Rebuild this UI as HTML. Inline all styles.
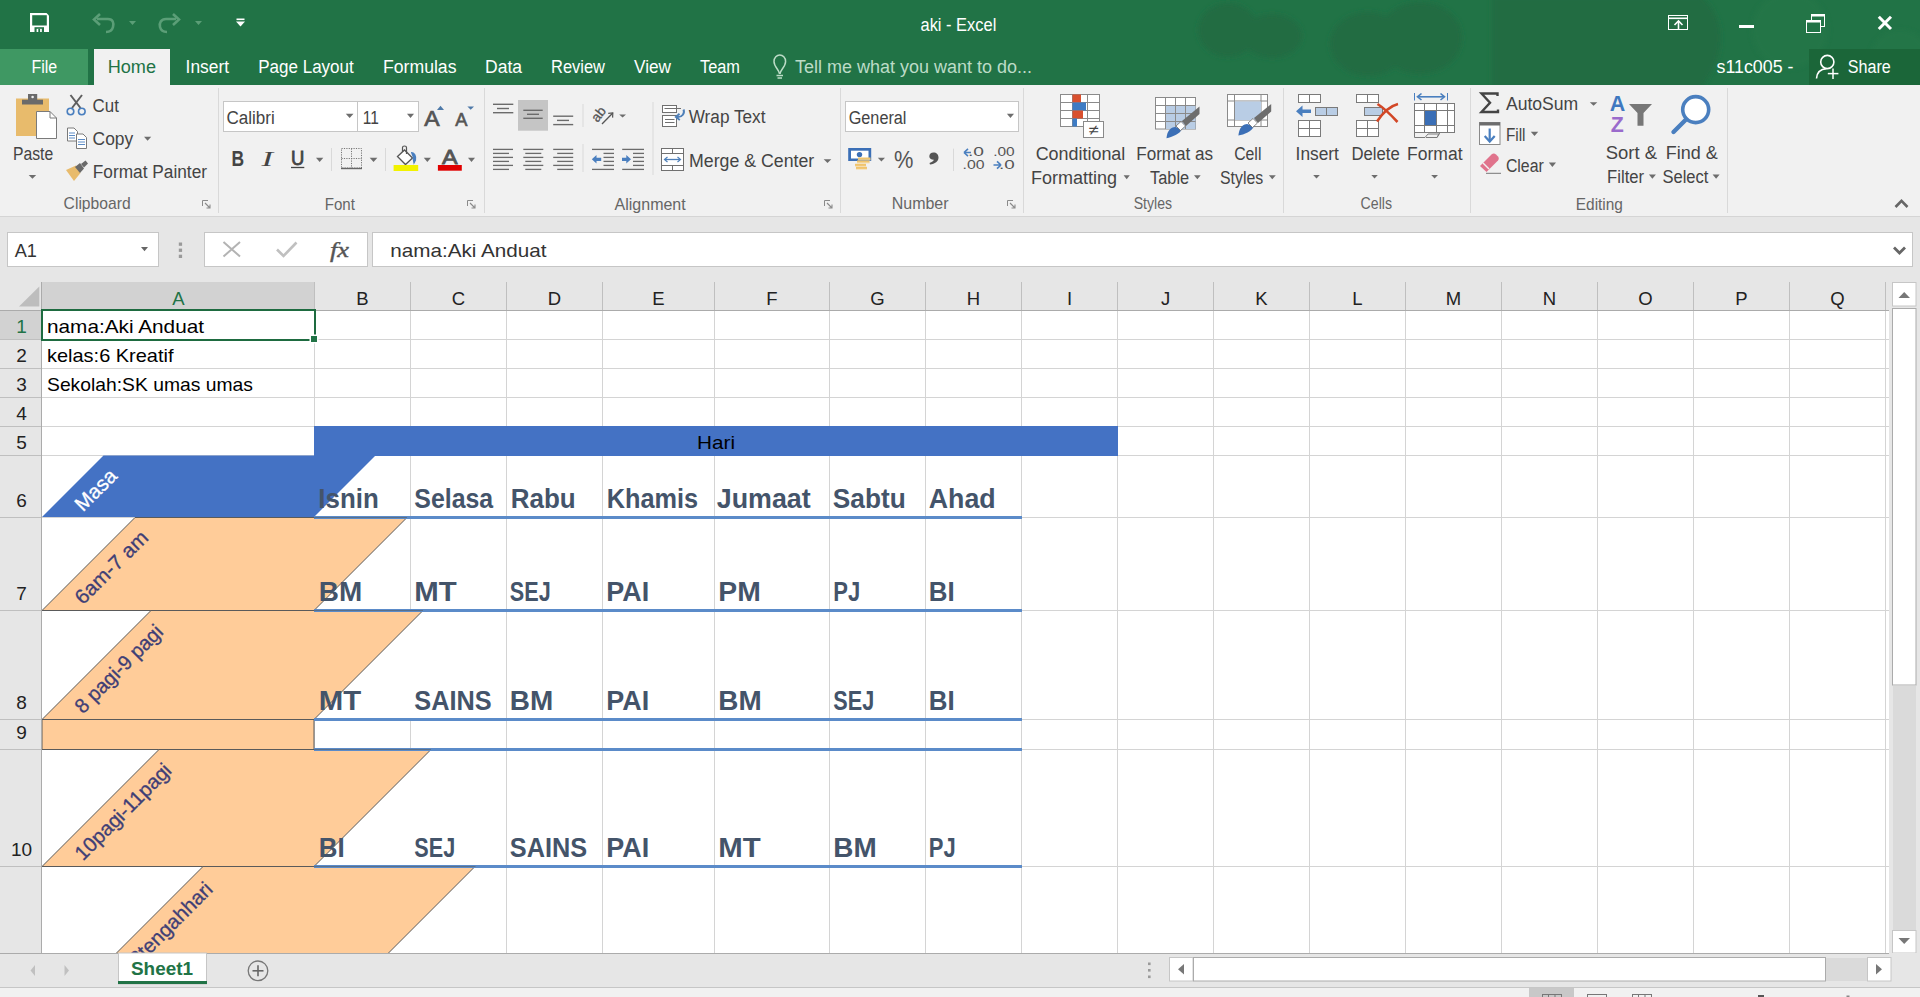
<!DOCTYPE html>
<html><head><meta charset="utf-8"><title>aki - Excel</title>
<style>
html,body{margin:0;padding:0;width:1920px;height:997px;overflow:hidden;background:#fff;}
svg{display:block;font-family:"Liberation Sans", sans-serif;}
</style></head><body>
<svg width="1920" height="997" viewBox="0 0 1920 997" shape-rendering="auto">
<rect x="0" y="0" width="1920" height="85" fill="#217346"/>
<defs><filter id="soft" x="-10%" y="-50%" width="120%" height="200%"><feGaussianBlur stdDeviation="2.5"/></filter></defs>
<g fill="#206c42" filter="url(#soft)">
<ellipse cx="1228" cy="30" rx="30" ry="27"/>
<ellipse cx="1272" cy="36" rx="30" ry="22"/>
<ellipse cx="1368" cy="44" rx="38" ry="32"/>
<ellipse cx="1420" cy="38" rx="42" ry="36"/>
<path d="M1492 -5 H1700 C1730 20 1725 60 1700 90 H1492 Z"/>
</g>
<g fill="#25784a" opacity="0.5" filter="url(#soft)">
<circle cx="1790" cy="30" r="38"/>
<circle cx="1900" cy="60" r="30"/>
</g>
<path d="M30 13 H46.5 L49 15.5 V32 H30 Z" fill="#ffffff"/>
<rect x="32.2" y="15.2" width="14.6" height="10.3" fill="#217346"/>
<rect x="34.5" y="27.2" width="9.5" height="4.8" fill="#217346"/>
<rect x="36.6" y="28.8" width="5.2" height="3.2" fill="#ffffff"/>
<rect x="38.3" y="28.8" width="1.8" height="3.2" fill="#217346"/>
<path d="M97 19 L108 19 C113 19 114 23 113 27 C112 31 109 32 106 32" fill="none" stroke="#5b9e77" stroke-width="2.6"/>
<path d="M100 14 L94 19.5 L100 25" fill="none" stroke="#5b9e77" stroke-width="2.6"/>
<path d="M129 21 H136 L132.5 25 Z" fill="#5b9e77"/>
<path d="M176 19 L166 19 C161 19 159 23 160 27 C161 31 164 32 167 32" fill="none" stroke="#5b9e77" stroke-width="2.6"/>
<path d="M173 14 L179 19.5 L173 25" fill="none" stroke="#5b9e77" stroke-width="2.6"/>
<path d="M195 21 H202 L198.5 25 Z" fill="#5b9e77"/>
<rect x="236.5" y="18.5" width="8" height="1.6" fill="#ffffff"/>
<path d="M236 21.5 H245 L240.5 26.5 Z" fill="#ffffff"/>
<text x="920.5" y="31" font-size="18" fill="#ffffff" textLength="75.8" lengthAdjust="spacingAndGlyphs">aki - Excel</text>
<rect x="1668.5" y="15.5" width="19" height="14" fill="none" stroke="#ffffff" stroke-width="1"/>
<rect x="1668" y="17.5" width="20" height="1.6" fill="#ffffff"/>
<line x1="1678.5" y1="29.5" x2="1678.5" y2="21.5" stroke="#ffffff" stroke-width="1.6"/>
<path d="M1674.5 25 L1678.5 21 L1682.5 25" fill="none" stroke="#ffffff" stroke-width="1.6"/>
<rect x="1739" y="25" width="15" height="3" fill="#ffffff"/>
<rect x="1811.5" y="14.5" width="13" height="12" fill="none" stroke="#ffffff" stroke-width="1"/>
<rect x="1811" y="14" width="14" height="2.5" fill="#ffffff"/>
<rect x="1806.5" y="20.5" width="14" height="12" fill="#217346" stroke="#ffffff" stroke-width="1"/>
<rect x="1806" y="20" width="15" height="2.5" fill="#ffffff"/>
<path d="M1878.8 16.8 L1891 29 M1891 16.8 L1878.8 29" fill="none" stroke="#ffffff" stroke-width="3"/>
<rect x="0" y="49" width="88" height="36" fill="#3f9863"/>
<rect x="94" y="49" width="76" height="36" fill="#f1f1f1"/>
<rect x="1809" y="49" width="111" height="36" fill="#1b6639"/>
<text x="31.5" y="72.7" font-size="18" fill="#ffffff" textLength="25.7" lengthAdjust="spacingAndGlyphs">File</text>
<text x="107.7" y="72.7" font-size="18" fill="#217346" textLength="48.3" lengthAdjust="spacingAndGlyphs">Home</text>
<text x="185.6" y="72.7" font-size="18" fill="#ffffff" textLength="43.4" lengthAdjust="spacingAndGlyphs">Insert</text>
<text x="258.2" y="72.7" font-size="18" fill="#ffffff" textLength="95.6" lengthAdjust="spacingAndGlyphs">Page Layout</text>
<text x="383" y="72.7" font-size="18" fill="#ffffff" textLength="73.5" lengthAdjust="spacingAndGlyphs">Formulas</text>
<text x="485" y="72.7" font-size="18" fill="#ffffff" textLength="37" lengthAdjust="spacingAndGlyphs">Data</text>
<text x="551" y="72.7" font-size="18" fill="#ffffff" textLength="54" lengthAdjust="spacingAndGlyphs">Review</text>
<text x="634" y="72.7" font-size="18" fill="#ffffff" textLength="37" lengthAdjust="spacingAndGlyphs">View</text>
<text x="700" y="72.7" font-size="18" fill="#ffffff" textLength="40" lengthAdjust="spacingAndGlyphs">Team</text>
<path d="M779.5 74 C779.5 70 774 67 774 61.5 C774 57.5 776.8 55 779.8 55 C782.8 55 785.6 57.5 785.6 61.5 C785.6 67 780 70 780 74" fill="none" stroke="#bcdcc7" stroke-width="1.5"/>
<line x1="776.5" y1="75.5" x2="783" y2="75.5" stroke="#bcdcc7" stroke-width="1.5"/>
<line x1="777.5" y1="78" x2="782" y2="78" stroke="#bcdcc7" stroke-width="1.5"/>
<text x="795" y="72.7" font-size="18" fill="#bcdcc7" textLength="237" lengthAdjust="spacingAndGlyphs">Tell me what you want to do...</text>
<text x="1716.6" y="72.6" font-size="18" fill="#ffffff" textLength="76.8" lengthAdjust="spacingAndGlyphs">s11c005 -</text>
<circle cx="1827.3" cy="62" r="6.6" fill="none" stroke="#ffffff" stroke-width="1.6"/>
<path d="M1816.5 78.5 C1817 72 1821 69 1826.5 68.8" fill="none" stroke="#ffffff" stroke-width="1.6"/>
<line x1="1833" y1="68.5" x2="1833" y2="79" stroke="#ffffff" stroke-width="1.5"/>
<line x1="1827.8" y1="73.6" x2="1838.4" y2="73.6" stroke="#ffffff" stroke-width="1.5"/>
<text x="1847.8" y="72.6" font-size="18" fill="#ffffff" textLength="43" lengthAdjust="spacingAndGlyphs">Share</text>
<rect x="0" y="85" width="1920" height="132" fill="#f1f1f1"/>
<line x1="0" y1="216.5" x2="1920" y2="216.5" stroke="#d5d5d5" stroke-width="1"/>
<rect x="16" y="98.5" width="33" height="37.5" fill="#e8bb6c"/>
<rect x="22" y="99.7" width="21" height="4.8" fill="#6a6a6a"/>
<rect x="28" y="94" width="9.2" height="6" fill="#6a6a6a"/>
<circle cx="32.6" cy="97" r="1.3" fill="#f1f1f1"/>
<path d="M36.5 111.5 H50 L56.5 118 V138.5 H36.5 Z" fill="#ffffff" stroke="#7a7a7a" stroke-width="1"/>
<path d="M50 111.5 V118 H56.5" fill="none" stroke="#7a7a7a" stroke-width="1"/>
<text x="13" y="159.7" font-size="18" fill="#444444" textLength="40.2" lengthAdjust="spacingAndGlyphs">Paste</text>
<path d="M28.7 175 H36.2 L32.45 178.8 Z" fill="#6d6d6d"/>
<path d="M70.5 95 L80.5 108 M82 95 L72 108" fill="none" stroke="#5f5f5f" stroke-width="2"/>
<circle cx="70.5" cy="111.5" r="3.3" fill="none" stroke="#4a7fbf" stroke-width="1.6"/>
<circle cx="81.8" cy="111.5" r="3.3" fill="none" stroke="#4a7fbf" stroke-width="1.6"/>
<text x="92.6" y="112.2" font-size="18" fill="#444444" textLength="26.3" lengthAdjust="spacingAndGlyphs">Cut</text>
<path d="M67.5 128 H74 L77.5 131.5 V141 H67.5 Z" fill="#ffffff" stroke="#7a7a7a" stroke-width="1"/>
<path d="M76.5 134 H83 L86.5 137.5 V148.5 H76.5 Z" fill="#ffffff" stroke="#7a7a7a" stroke-width="1"/>
<line x1="69" y1="133" x2="75" y2="133" stroke="#4a7fbf" stroke-width="0.9"/>
<line x1="69" y1="135.5" x2="75" y2="135.5" stroke="#4a7fbf" stroke-width="0.9"/>
<line x1="69" y1="138" x2="75" y2="138" stroke="#4a7fbf" stroke-width="0.9"/>
<line x1="78" y1="139.5" x2="85" y2="139.5" stroke="#4a7fbf" stroke-width="0.9"/>
<line x1="78" y1="142" x2="85" y2="142" stroke="#4a7fbf" stroke-width="0.9"/>
<line x1="78" y1="144.5" x2="85" y2="144.5" stroke="#4a7fbf" stroke-width="0.9"/>
<text x="92.6" y="144.8" font-size="18" fill="#444444" textLength="40.6" lengthAdjust="spacingAndGlyphs">Copy</text>
<path d="M144 136.8 H151.2 L147.6 140.8 Z" fill="#6d6d6d"/>
<path d="M66 170 L76 165.5 L80.5 173 L74 181 Z" fill="#e8bb6c"/>
<path d="M75 167 L80 163 L84 168.5 L80 173 Z" fill="#6a6a6a"/>
<path d="M81 164 L85.5 160.5 L88 163.5 L84 167.5 Z" fill="#6a6a6a"/>
<text x="92.8" y="178.1" font-size="18" fill="#444444" textLength="114.2" lengthAdjust="spacingAndGlyphs">Format Painter</text>
<text x="63.6" y="209.2" font-size="17" fill="#666666" textLength="67" lengthAdjust="spacingAndGlyphs">Clipboard</text>
<path d="M202.5 206 V200.5 H208" fill="none" stroke="#8a8a8a" stroke-width="1"/>
<path d="M205 203 L210 208 M210 204.5 V208 H206.5" fill="none" stroke="#8a8a8a" stroke-width="1.1"/>
<line x1="218.5" y1="88" x2="218.5" y2="213" stroke="#d9d9d9" stroke-width="1"/>
<rect x="223.5" y="101.5" width="134" height="30" fill="#ffffff" stroke="#c6c6c6" stroke-width="1"/>
<rect x="357.5" y="101.5" width="61" height="30" fill="#ffffff" stroke="#c6c6c6" stroke-width="1"/>
<text x="226.5" y="124" font-size="18" fill="#444444" textLength="48.3" lengthAdjust="spacingAndGlyphs">Calibri</text>
<path d="M345.8 113.8 H353.5 L349.65 118 Z" fill="#6d6d6d"/>
<text x="362.7" y="124" font-size="18" fill="#444444" textLength="16.1" lengthAdjust="spacingAndGlyphs">11</text>
<path d="M407 113.8 H414 L410.5 118 Z" fill="#6d6d6d"/>
<text x="424.3" y="125.8" font-size="22" fill="#555" textLength="15.4" lengthAdjust="spacingAndGlyphs" stroke="#555" stroke-width="0.7">A</text>
<path d="M437 110 L440.5 105.7 L444 110 Z" fill="#4e79a8"/>
<text x="455.2" y="125.8" font-size="17.5" fill="#555" textLength="12.2" lengthAdjust="spacingAndGlyphs" stroke="#555" stroke-width="0.6">A</text>
<path d="M467.4 106.4 H474 L470.7 109.8 Z" fill="#4e79a8"/>
<text x="231.6" y="165.9" font-size="22" fill="#444" font-weight="bold" textLength="12.6" lengthAdjust="spacingAndGlyphs">B</text>
<text x="261.4" y="165.9" font-size="22" fill="#444" font-family="Liberation Serif" font-style="italic" textLength="11.6" lengthAdjust="spacingAndGlyphs">I</text>
<text x="291" y="164.7" font-size="20" fill="#444" textLength="13.3" lengthAdjust="spacingAndGlyphs" stroke="#444" stroke-width="0.8">U</text>
<line x1="291" y1="167.5" x2="304.3" y2="167.5" stroke="#444" stroke-width="1.3"/>
<path d="M316 157.7 H323.3 L319.65 162 Z" fill="#6d6d6d"/>
<line x1="331.5" y1="148" x2="331.5" y2="171" stroke="#d9d9d9" stroke-width="1"/>
<g stroke="#777" stroke-width="1" stroke-dasharray="1.2 1.2" fill="none">
<rect x="341.5" y="148.5" width="20" height="19.5"/>
<line x1="351.5" y1="148.5" x2="351.5" y2="168"/>
<line x1="341.5" y1="158.5" x2="361.5" y2="158.5"/>
</g>
<line x1="341" y1="168.5" x2="362" y2="168.5" stroke="#666" stroke-width="1.4"/>
<path d="M369.7 157.7 H377.4 L373.54999999999995 162 Z" fill="#6d6d6d"/>
<line x1="385.5" y1="148" x2="385.5" y2="171" stroke="#d9d9d9" stroke-width="1"/>
<path d="M397.5 156.5 L404.5 150 L412.5 158 L405.5 164.5 Z" fill="#ffffff" stroke="#555" stroke-width="1.3"/>
<path d="M402.5 152 V147.5 C402.5 145.5 406.5 145.5 406.5 147.5 V154" fill="none" stroke="#555" stroke-width="1.2"/>
<path d="M411 152.5 C414.5 152.5 416 155.5 415.5 160 L414 163 L413 158" fill="#4a7fbf" stroke="#4a7fbf" stroke-width="1.2"/>
<rect x="393.6" y="165" width="24.6" height="6" fill="#f2f200"/>
<path d="M423.8 157.7 H430.9 L427.35 162 Z" fill="#6d6d6d"/>
<text x="442" y="164" font-size="20" fill="#555" textLength="15.6" lengthAdjust="spacingAndGlyphs" stroke="#555" stroke-width="0.8">A</text>
<rect x="437.9" y="165" width="23.9" height="5.7" fill="#e00000"/>
<path d="M468 157.7 H475 L471.5 162 Z" fill="#6d6d6d"/>
<text x="324.7" y="209.75" font-size="17" fill="#666666" textLength="30.2" lengthAdjust="spacingAndGlyphs">Font</text>
<path d="M467.5 206 V200.5 H473" fill="none" stroke="#8a8a8a" stroke-width="1"/>
<path d="M470 203 L475 208 M475 204.5 V208 H471.5" fill="none" stroke="#8a8a8a" stroke-width="1.1"/>
<line x1="484.5" y1="88" x2="484.5" y2="213" stroke="#d9d9d9" stroke-width="1"/>
<line x1="493" y1="104.3" x2="513.3" y2="104.3" stroke="#6b6b6b" stroke-width="1.4"/>
<line x1="497" y1="108.5" x2="509" y2="108.5" stroke="#6b6b6b" stroke-width="1.4"/>
<line x1="493" y1="112.7" x2="513.3" y2="112.7" stroke="#6b6b6b" stroke-width="1.4"/>
<rect x="518" y="100" width="30" height="30.7" fill="#c5c5c5"/>
<line x1="523.3" y1="110.3" x2="542.7" y2="110.3" stroke="#6b6b6b" stroke-width="1.4"/>
<line x1="527" y1="114.3" x2="539" y2="114.3" stroke="#6b6b6b" stroke-width="1.4"/>
<line x1="523.3" y1="118.3" x2="542.7" y2="118.3" stroke="#6b6b6b" stroke-width="1.4"/>
<line x1="553.2" y1="116.2" x2="573.2" y2="116.2" stroke="#6b6b6b" stroke-width="1.4"/>
<line x1="557" y1="120.4" x2="569" y2="120.4" stroke="#6b6b6b" stroke-width="1.4"/>
<line x1="553.2" y1="124.6" x2="573.2" y2="124.6" stroke="#6b6b6b" stroke-width="1.4"/>
<line x1="583.0" y1="104" x2="583.0" y2="127" stroke="#d9d9d9" stroke-width="1"/>
<text x="0" y="0" font-size="13.5" fill="#555" stroke="#555" stroke-width="0.3" transform="translate(597.5,123) rotate(-52)">ab</text>
<line x1="602" y1="124" x2="612.8" y2="113" stroke="#555" stroke-width="1.3"/>
<path d="M608.2 113.3 L612.8 113 L612.6 117.6" fill="none" stroke="#555" stroke-width="1.2"/>
<path d="M619.2 114.5 H626 L622.6 117.4 Z" fill="#6d6d6d"/>
<line x1="653.0" y1="102" x2="653.0" y2="175" stroke="#d9d9d9" stroke-width="1"/>
<rect x="662.5" y="105.5" width="14" height="7" fill="#ffffff" stroke="#707070" stroke-width="1"/>
<line x1="664.5" y1="108.5" x2="681" y2="108.5" stroke="#707070" stroke-width="1"/>
<rect x="662.5" y="115.5" width="14" height="11" fill="#ffffff" stroke="#707070" stroke-width="1"/>
<line x1="665" y1="119.5" x2="674.5" y2="119.5" stroke="#707070" stroke-width="1"/>
<line x1="665" y1="122.5" x2="674.5" y2="122.5" stroke="#707070" stroke-width="1"/>
<path d="M683.5 109.5 C685 113 682.5 117.5 677 117" fill="none" stroke="#4e7fb8" stroke-width="2"/>
<path d="M679.5 113.8 L675.8 117 L679.8 120" fill="none" stroke="#4e7fb8" stroke-width="1.8"/>
<text x="688.7" y="122.5" font-size="18" fill="#444444" textLength="76.8" lengthAdjust="spacingAndGlyphs">Wrap Text</text>
<line x1="493" y1="149.4" x2="513" y2="149.4" stroke="#6b6b6b" stroke-width="1.3"/>
<line x1="493" y1="153.4" x2="509" y2="153.4" stroke="#6b6b6b" stroke-width="1.3"/>
<line x1="493" y1="157.4" x2="513" y2="157.4" stroke="#6b6b6b" stroke-width="1.3"/>
<line x1="493" y1="161.4" x2="509" y2="161.4" stroke="#6b6b6b" stroke-width="1.3"/>
<line x1="493" y1="165.4" x2="513" y2="165.4" stroke="#6b6b6b" stroke-width="1.3"/>
<line x1="493" y1="169.4" x2="509" y2="169.4" stroke="#6b6b6b" stroke-width="1.3"/>
<line x1="523.3" y1="149.4" x2="543.3" y2="149.4" stroke="#6b6b6b" stroke-width="1.3"/>
<line x1="525.3" y1="153.4" x2="541.3" y2="153.4" stroke="#6b6b6b" stroke-width="1.3"/>
<line x1="523.3" y1="157.4" x2="543.3" y2="157.4" stroke="#6b6b6b" stroke-width="1.3"/>
<line x1="525.3" y1="161.4" x2="541.3" y2="161.4" stroke="#6b6b6b" stroke-width="1.3"/>
<line x1="523.3" y1="165.4" x2="543.3" y2="165.4" stroke="#6b6b6b" stroke-width="1.3"/>
<line x1="525.3" y1="169.4" x2="541.3" y2="169.4" stroke="#6b6b6b" stroke-width="1.3"/>
<line x1="553.2" y1="149.4" x2="573.2" y2="149.4" stroke="#6b6b6b" stroke-width="1.3"/>
<line x1="557.2" y1="153.4" x2="573.2" y2="153.4" stroke="#6b6b6b" stroke-width="1.3"/>
<line x1="553.2" y1="157.4" x2="573.2" y2="157.4" stroke="#6b6b6b" stroke-width="1.3"/>
<line x1="557.2" y1="161.4" x2="573.2" y2="161.4" stroke="#6b6b6b" stroke-width="1.3"/>
<line x1="553.2" y1="165.4" x2="573.2" y2="165.4" stroke="#6b6b6b" stroke-width="1.3"/>
<line x1="557.2" y1="169.4" x2="573.2" y2="169.4" stroke="#6b6b6b" stroke-width="1.3"/>
<line x1="583.0" y1="144" x2="583.0" y2="172" stroke="#d9d9d9" stroke-width="1"/>
<line x1="592" y1="149.4" x2="614" y2="149.4" stroke="#6b6b6b" stroke-width="1.3"/>
<line x1="603.5" y1="153.4" x2="614" y2="153.4" stroke="#6b6b6b" stroke-width="1.3"/>
<line x1="603.5" y1="157.4" x2="614" y2="157.4" stroke="#6b6b6b" stroke-width="1.3"/>
<line x1="603.5" y1="161.4" x2="614" y2="161.4" stroke="#6b6b6b" stroke-width="1.3"/>
<line x1="603.5" y1="165.4" x2="614" y2="165.4" stroke="#6b6b6b" stroke-width="1.3"/>
<line x1="592" y1="169.4" x2="614" y2="169.4" stroke="#6b6b6b" stroke-width="1.3"/>
<path d="M591.8 159.3 L596.5 155 V157.7 H601.2 V160.9 H596.5 V163.6 Z" fill="#4a7fbf"/>
<line x1="622.2" y1="149.4" x2="644" y2="149.4" stroke="#6b6b6b" stroke-width="1.3"/>
<line x1="633" y1="153.4" x2="644" y2="153.4" stroke="#6b6b6b" stroke-width="1.3"/>
<line x1="633" y1="157.4" x2="644" y2="157.4" stroke="#6b6b6b" stroke-width="1.3"/>
<line x1="633" y1="161.4" x2="644" y2="161.4" stroke="#6b6b6b" stroke-width="1.3"/>
<line x1="633" y1="165.4" x2="644" y2="165.4" stroke="#6b6b6b" stroke-width="1.3"/>
<line x1="622.2" y1="169.4" x2="644" y2="169.4" stroke="#6b6b6b" stroke-width="1.3"/>
<path d="M631 159.3 L626.3 155 V157.7 H622 V160.9 H626.3 V163.6 Z" fill="#4a7fbf"/>
<rect x="661.5" y="148.5" width="22" height="22" fill="#ffffff" stroke="#707070" stroke-width="1"/>
<line x1="661.5" y1="153.5" x2="683.5" y2="153.5" stroke="#707070" stroke-width="1"/>
<line x1="661.5" y1="165.5" x2="683.5" y2="165.5" stroke="#707070" stroke-width="1"/>
<line x1="672.5" y1="148.5" x2="672.5" y2="153.5" stroke="#707070" stroke-width="1"/>
<line x1="672.5" y1="165.5" x2="672.5" y2="170.5" stroke="#707070" stroke-width="1"/>
<line x1="665" y1="159.5" x2="680" y2="159.5" stroke="#4e7fb8" stroke-width="1.3"/>
<path d="M667.5 157 L664.5 159.5 L667.5 162 M677.5 157 L680.5 159.5 L677.5 162" fill="none" stroke="#4e7fb8" stroke-width="1.2"/>
<text x="689.1" y="166.8" font-size="18" fill="#444444" textLength="125.1" lengthAdjust="spacingAndGlyphs">Merge &amp; Center</text>
<path d="M823.7 159.2 H831.3 L827.5 163 Z" fill="#6d6d6d"/>
<text x="614.6" y="209.6" font-size="17" fill="#666666" textLength="71.1" lengthAdjust="spacingAndGlyphs">Alignment</text>
<path d="M824.5 206 V200.5 H830" fill="none" stroke="#8a8a8a" stroke-width="1"/>
<path d="M827 203 L832 208 M832 204.5 V208 H828.5" fill="none" stroke="#8a8a8a" stroke-width="1.1"/>
<line x1="840.5" y1="88" x2="840.5" y2="213" stroke="#d9d9d9" stroke-width="1"/>
<rect x="845.5" y="101.5" width="173" height="30" fill="#ffffff" stroke="#c6c6c6" stroke-width="1"/>
<text x="848.7" y="123.8" font-size="18" fill="#444444" textLength="57.8" lengthAdjust="spacingAndGlyphs">General</text>
<path d="M1006.9 113.7 H1014 L1010.45 118 Z" fill="#6d6d6d"/>
<rect x="848.2" y="148" width="23" height="13" fill="#3b6fb6"/>
<rect x="851" y="150.7" width="17.5" height="7.8" fill="#ffffff"/>
<circle cx="859.5" cy="154.6" r="2.7" fill="#3b6fb6"/>
<rect x="858" y="157.5" width="12.5" height="2.3" fill="#f0c46c"/>
<line x1="858" y1="160.0" x2="870.5" y2="160.0" stroke="#f7e0b0" stroke-width="0.8"/>
<rect x="857" y="160.5" width="12.5" height="2.3" fill="#f0c46c"/>
<line x1="857" y1="163.0" x2="869.5" y2="163.0" stroke="#f7e0b0" stroke-width="0.8"/>
<rect x="855" y="163.8" width="11" height="2.3" fill="#f0c46c"/>
<line x1="855" y1="166.3" x2="866" y2="166.3" stroke="#f7e0b0" stroke-width="0.8"/>
<rect x="856" y="166.8" width="11" height="2.3" fill="#f0c46c"/>
<line x1="856" y1="169.3" x2="867" y2="169.3" stroke="#f7e0b0" stroke-width="0.8"/>
<path d="M877.8 157.7 H885 L881.4 161.6 Z" fill="#6d6d6d"/>
<text x="894" y="167.9" font-size="23" fill="#555" textLength="19.4" lengthAdjust="spacingAndGlyphs">%</text>
<path d="M933.5 152.5 C936.5 152.5 938.5 154.5 938.5 157.5 C938.5 161.5 935 164 930 164.5 L929.5 163 C932 162.3 933.5 161 933.8 159.8 C931 159.8 929.3 158.2 929.3 156.2 C929.3 154 931 152.5 933.5 152.5 Z" fill="#555"/>
<line x1="953.5" y1="148.6" x2="953.5" y2="171" stroke="#d9d9d9" stroke-width="1"/>
<text x="968" y="156.4" font-size="13" fill="#555" textLength="16" lengthAdjust="spacingAndGlyphs">.0</text>
<text x="962.6" y="168.8" font-size="13" fill="#555" textLength="22" lengthAdjust="spacingAndGlyphs">.00</text>
<path d="M964 152.5 L968 148.8 M964 152.5 L968 156.2 M964 152.5 H971" fill="none" stroke="#4a7fbf" stroke-width="1.6"/>
<text x="993.2" y="156.4" font-size="13" fill="#555" textLength="21.5" lengthAdjust="spacingAndGlyphs">.00</text>
<text x="999" y="168.8" font-size="13" fill="#555" textLength="15.7" lengthAdjust="spacingAndGlyphs">.0</text>
<path d="M1001 165 L997 161.3 M1001 165 L997 168.7 M1001 165 H993.5" fill="none" stroke="#4a7fbf" stroke-width="1.6"/>
<text x="891.7" y="209.3" font-size="17" fill="#666666" textLength="56.9" lengthAdjust="spacingAndGlyphs">Number</text>
<path d="M1007.5 206 V200.5 H1013" fill="none" stroke="#8a8a8a" stroke-width="1"/>
<path d="M1010 203 L1015 208 M1015 204.5 V208 H1011.5" fill="none" stroke="#8a8a8a" stroke-width="1.1"/>
<line x1="1023.5" y1="88" x2="1023.5" y2="213" stroke="#d9d9d9" stroke-width="1"/>
<rect x="1060.5" y="94.5" width="39" height="32" fill="#ffffff" stroke="#8a8a8a" stroke-width="1"/>
<line x1="1072.5" y1="94.5" x2="1072.5" y2="126.5" stroke="#8a8a8a" stroke-width="1"/>
<line x1="1087.5" y1="94.5" x2="1087.5" y2="126.5" stroke="#8a8a8a" stroke-width="1"/>
<line x1="1060.5" y1="102.5" x2="1099.5" y2="102.5" stroke="#8a8a8a" stroke-width="1"/>
<line x1="1060.5" y1="110.5" x2="1099.5" y2="110.5" stroke="#8a8a8a" stroke-width="1"/>
<line x1="1060.5" y1="118.5" x2="1099.5" y2="118.5" stroke="#8a8a8a" stroke-width="1"/>
<rect x="1072.5" y="94.5" width="8.5" height="8" fill="#d9502f"/>
<rect x="1072.5" y="102.5" width="13.5" height="8" fill="#3d7bc4"/>
<rect x="1072.5" y="110.5" width="10.5" height="8" fill="#d9502f"/>
<rect x="1072.5" y="118.5" width="4.5" height="8" fill="#3d7bc4"/>
<rect x="1083.5" y="121.5" width="20" height="16" fill="#ffffff" stroke="#8a8a8a" stroke-width="1"/>
<text x="1088.5" y="134.5" font-size="15" fill="#444" textLength="10" lengthAdjust="spacingAndGlyphs">≠</text>
<text x="1035.7" y="159.6" font-size="18" fill="#444444" textLength="89.6" lengthAdjust="spacingAndGlyphs">Conditional</text>
<text x="1031" y="183.7" font-size="18" fill="#444444" textLength="86" lengthAdjust="spacingAndGlyphs">Formatting</text>
<path d="M1123.6 175.3 H1129.8 L1126.6999999999998 179.2 Z" fill="#6d6d6d"/>
<rect x="1155.5" y="97.5" width="40" height="31.5" fill="#ffffff" stroke="#8a8a8a" stroke-width="1"/>
<rect x="1165" y="105.5" width="30.5" height="23.5" fill="#b9cde5"/>
<line x1="1165.5" y1="97.5" x2="1165.5" y2="129" stroke="#8a8a8a" stroke-width="1"/>
<line x1="1175.5" y1="97.5" x2="1175.5" y2="129" stroke="#8a8a8a" stroke-width="1"/>
<line x1="1185.5" y1="97.5" x2="1185.5" y2="129" stroke="#8a8a8a" stroke-width="1"/>
<line x1="1155.5" y1="105.5" x2="1195.5" y2="105.5" stroke="#8a8a8a" stroke-width="1"/>
<line x1="1155.5" y1="113.5" x2="1195.5" y2="113.5" stroke="#8a8a8a" stroke-width="1"/>
<line x1="1155.5" y1="121.5" x2="1195.5" y2="121.5" stroke="#8a8a8a" stroke-width="1"/>
<path d="M1182 121 L1199.5 106.5 L1199.5 114 L1186 126 Z" fill="#6d6d6d"/>
<path d="M1175 127 C1168 128 1167 134 1166.5 138.3 C1172 137 1180 134 1182 129 Z" fill="#3b6fb6"/>
<path d="M1176 126 L1181 121.5 L1185.5 126 L1180.5 130.5 Z" fill="#ffffff" stroke="#6d6d6d" stroke-width="0.8"/>
<text x="1136.2" y="159.6" font-size="18" fill="#444444" textLength="77" lengthAdjust="spacingAndGlyphs">Format as</text>
<text x="1150.1" y="183.7" font-size="18" fill="#444444" textLength="39.1" lengthAdjust="spacingAndGlyphs">Table</text>
<path d="M1194 175.3 H1200.7 L1197.35 179.2 Z" fill="#6d6d6d"/>
<rect x="1227.5" y="94.5" width="40" height="32" fill="#ffffff" stroke="#8a8a8a" stroke-width="1"/>
<line x1="1234.5" y1="94.5" x2="1234.5" y2="126.5" stroke="#8a8a8a" stroke-width="1"/>
<line x1="1261" y1="94.5" x2="1261" y2="126.5" stroke="#8a8a8a" stroke-width="1"/>
<line x1="1227.5" y1="101" x2="1267.5" y2="101" stroke="#8a8a8a" stroke-width="1"/>
<line x1="1227.5" y1="120" x2="1267.5" y2="120" stroke="#8a8a8a" stroke-width="1"/>
<rect x="1235" y="101.5" width="26" height="18.5" fill="#b9cde5"/>
<path d="M1254 118 L1271.2 104 L1271.2 111.5 L1258 123 Z" fill="#6d6d6d"/>
<path d="M1247 124 C1240 125 1239 131 1238.4 135.6 C1244 134.5 1252 131.5 1254 126 Z" fill="#3b6fb6"/>
<path d="M1248 123 L1253 118.5 L1257.5 123 L1252.5 127.5 Z" fill="#ffffff" stroke="#6d6d6d" stroke-width="0.8"/>
<text x="1234.2" y="159.6" font-size="18" fill="#444444" textLength="27.2" lengthAdjust="spacingAndGlyphs">Cell</text>
<text x="1220" y="183.7" font-size="18" fill="#444444" textLength="43.2" lengthAdjust="spacingAndGlyphs">Styles</text>
<path d="M1268.8 175.3 H1275.8 L1272.3 179.2 Z" fill="#6d6d6d"/>
<text x="1133.7" y="208.8" font-size="17" fill="#666666" textLength="38.3" lengthAdjust="spacingAndGlyphs">Styles</text>
<line x1="1283.5" y1="88" x2="1283.5" y2="213" stroke="#d9d9d9" stroke-width="1"/>
<rect x="1298.5" y="94.5" width="22" height="8" fill="#ffffff" stroke="#7a7a7a" stroke-width="1"/>
<line x1="1309.5" y1="94.5" x2="1309.5" y2="102.5" stroke="#7a7a7a" stroke-width="1"/>
<rect x="1315.5" y="107.5" width="22" height="8" fill="#b9cde5" stroke="#7a7a7a" stroke-width="1"/>
<line x1="1326.5" y1="107.5" x2="1326.5" y2="115.5" stroke="#7a7a7a" stroke-width="1"/>
<path d="M1296 111.3 L1302.5 105.5 V109.5 H1311 V113 H1302.5 V117 Z" fill="#4a7fbf"/>
<rect x="1298.5" y="120.5" width="22" height="16" fill="#ffffff" stroke="#7a7a7a" stroke-width="1"/>
<line x1="1309.5" y1="120.5" x2="1309.5" y2="136.5" stroke="#7a7a7a" stroke-width="1"/>
<line x1="1298.5" y1="128.5" x2="1320.5" y2="128.5" stroke="#7a7a7a" stroke-width="1"/>
<text x="1295.6" y="159.7" font-size="18" fill="#444444" textLength="43.3" lengthAdjust="spacingAndGlyphs">Insert</text>
<path d="M1313.2 175 H1319.8 L1316.5 178.6 Z" fill="#6d6d6d"/>
<rect x="1356.5" y="94.5" width="22" height="8" fill="#ffffff" stroke="#7a7a7a" stroke-width="1"/>
<line x1="1367.5" y1="94.5" x2="1367.5" y2="102.5" stroke="#7a7a7a" stroke-width="1"/>
<rect x="1364.5" y="107.5" width="18" height="8" fill="#b9cde5" stroke="#7a7a7a" stroke-width="1"/>
<rect x="1356.5" y="120.5" width="22" height="16" fill="#ffffff" stroke="#7a7a7a" stroke-width="1"/>
<line x1="1367.5" y1="120.5" x2="1367.5" y2="136.5" stroke="#7a7a7a" stroke-width="1"/>
<line x1="1356.5" y1="128.5" x2="1378.5" y2="128.5" stroke="#7a7a7a" stroke-width="1"/>
<path d="M1377.5 104 C1384 108 1391 115 1397.5 122 M1398 104 C1390 106 1382 114 1377 121.5" fill="none" stroke="#d24726" stroke-width="2.6"/>
<text x="1351.4" y="159.7" font-size="18" fill="#444444" textLength="48.3" lengthAdjust="spacingAndGlyphs">Delete</text>
<path d="M1371.3 175 H1377.8 L1374.55 178.6 Z" fill="#6d6d6d"/>
<line x1="1414.5" y1="93" x2="1414.5" y2="100.5" stroke="#4a7fbf" stroke-width="1"/>
<line x1="1447.5" y1="93" x2="1447.5" y2="100.5" stroke="#4a7fbf" stroke-width="1"/>
<line x1="1418" y1="96.8" x2="1444" y2="96.8" stroke="#4a7fbf" stroke-width="1.6"/>
<path d="M1421.5 93.5 L1417.5 96.8 L1421.5 100 M1440.5 93.5 L1444.5 96.8 L1440.5 100" fill="none" stroke="#4a7fbf" stroke-width="1.6"/>
<rect x="1414.5" y="103.5" width="40" height="29" fill="#ffffff" stroke="#7a7a7a" stroke-width="1"/>
<line x1="1424.5" y1="103.5" x2="1424.5" y2="132.5" stroke="#7a7a7a" stroke-width="1"/>
<line x1="1436.5" y1="103.5" x2="1436.5" y2="132.5" stroke="#7a7a7a" stroke-width="1"/>
<line x1="1447.5" y1="103.5" x2="1447.5" y2="132.5" stroke="#7a7a7a" stroke-width="1"/>
<line x1="1414.5" y1="110.5" x2="1454.5" y2="110.5" stroke="#7a7a7a" stroke-width="1"/>
<line x1="1414.5" y1="125.5" x2="1454.5" y2="125.5" stroke="#7a7a7a" stroke-width="1"/>
<rect x="1425" y="111" width="11" height="14" fill="#3b6fb6"/>
<path d="M1414.5 132.5 V137.5 H1425 L1428 134 H1439 L1437 137.5 H1426 M1437 137.5 L1440 132.5" fill="none" stroke="#7a7a7a" stroke-width="1"/>
<text x="1407.1" y="159.7" font-size="18" fill="#444444" textLength="55.4" lengthAdjust="spacingAndGlyphs">Format</text>
<path d="M1431.2 175 H1438 L1434.6 178.6 Z" fill="#6d6d6d"/>
<text x="1360.6" y="209.2" font-size="17" fill="#666666" textLength="31.5" lengthAdjust="spacingAndGlyphs">Cells</text>
<line x1="1470.5" y1="88" x2="1470.5" y2="213" stroke="#d9d9d9" stroke-width="1"/>
<path d="M1497.5 96 V93.5 H1481.5 L1490 102.8 L1481.5 112 H1498 V109.5" fill="none" stroke="#444" stroke-width="2.4"/>
<text x="1505.9" y="109.9" font-size="18" fill="#444444" textLength="72.4" lengthAdjust="spacingAndGlyphs">AutoSum</text>
<path d="M1589.8 102.2 H1597.3 L1593.55 105.7 Z" fill="#6d6d6d"/>
<rect x="1479.5" y="122.5" width="20.5" height="22" fill="#ffffff" stroke="#8a8a8a" stroke-width="1"/>
<rect x="1479.5" y="122.3" width="20.5" height="3.2" fill="#6d6d6d"/>
<line x1="1489.7" y1="128.5" x2="1489.7" y2="141" stroke="#4a7fbf" stroke-width="2.2"/>
<path d="M1484.7 136 L1489.7 141.5 L1494.7 136" fill="none" stroke="#4a7fbf" stroke-width="2.2"/>
<text x="1505.9" y="140.8" font-size="18" fill="#444444" textLength="19.6" lengthAdjust="spacingAndGlyphs">Fill</text>
<path d="M1530.8 131.7 H1538.2 L1534.5 135.9 Z" fill="#6d6d6d"/>
<path d="M1480 166 L1491.5 154.5 C1493 153 1494.5 153 1496 154.5 L1498 156.5 C1499 158 1499 159 1498 160.5 L1486.5 172 Z" fill="#e0738c"/>
<path d="M1483 163 L1489 169" fill="none" stroke="#f1f1f1" stroke-width="1.4"/>
<line x1="1486" y1="173.3" x2="1501" y2="173.3" stroke="#777" stroke-width="1"/>
<text x="1505.9" y="172.1" font-size="18" fill="#444444" textLength="37.9" lengthAdjust="spacingAndGlyphs">Clear</text>
<path d="M1548.8 162.6 H1556 L1552.4 166.9 Z" fill="#6d6d6d"/>
<text x="1609.8" y="110.6" font-size="22" fill="#3f78c0" font-weight="bold" textLength="15.5" lengthAdjust="spacingAndGlyphs">A</text>
<text x="1610.8" y="131.7" font-size="22" fill="#9a6bcc" font-weight="bold" textLength="13" lengthAdjust="spacingAndGlyphs">Z</text>
<path d="M1629 104 H1652 L1643.5 113 V125.7 H1637.5 V113 Z" fill="#777777"/>
<text x="1605.7" y="159.4" font-size="18" fill="#444444" textLength="51.3" lengthAdjust="spacingAndGlyphs">Sort &amp;</text>
<text x="1607.1" y="183.3" font-size="18" fill="#444444" textLength="37" lengthAdjust="spacingAndGlyphs">Filter</text>
<path d="M1648.9 174.6 H1655.9 L1652.4 178.8 Z" fill="#6d6d6d"/>
<circle cx="1695.7" cy="109.6" r="13" fill="#ffffff" stroke="#4a7fbf" stroke-width="3.6"/>
<line x1="1673.5" y1="132" x2="1686" y2="119.5" stroke="#4a7fbf" stroke-width="4.4" stroke-linecap="round"/>
<text x="1665.8" y="159.4" font-size="18" fill="#444444" textLength="52" lengthAdjust="spacingAndGlyphs">Find &amp;</text>
<text x="1662.4" y="183.3" font-size="18" fill="#444444" textLength="46" lengthAdjust="spacingAndGlyphs">Select</text>
<path d="M1712.6 174.6 H1719.6 L1716.1 178.8 Z" fill="#6d6d6d"/>
<text x="1575.75" y="209.75" font-size="17" fill="#666666" textLength="47.2" lengthAdjust="spacingAndGlyphs">Editing</text>
<line x1="1727.5" y1="88" x2="1727.5" y2="213" stroke="#d9d9d9" stroke-width="1"/>
<path d="M1895.5 207 L1901.5 200.8 L1907.5 207" fill="none" stroke="#666" stroke-width="2.6"/>
<rect x="0" y="217" width="1920" height="65" fill="#e6e6e6"/>
<rect x="7.5" y="232.5" width="151" height="34" fill="#ffffff" stroke="#c6c6c6" stroke-width="1"/>
<text x="14.75" y="256.9" font-size="19" fill="#333" textLength="22.2" lengthAdjust="spacingAndGlyphs">A1</text>
<path d="M141 247 H148 L144.5 251.3 Z" fill="#666"/>
<rect x="178.8" y="242.5" width="3.3" height="3.3" fill="#9a9a9a"/>
<rect x="178.8" y="248.6" width="3.3" height="3.3" fill="#9a9a9a"/>
<rect x="178.8" y="254.7" width="3.3" height="3.3" fill="#9a9a9a"/>
<rect x="204.5" y="232.5" width="163" height="34" fill="#ffffff" stroke="#c6c6c6" stroke-width="1"/>
<path d="M223.5 242 L240 256.5 M240 242 L223.5 256.5" fill="none" stroke="#b3b3b3" stroke-width="2"/>
<path d="M277 249.5 L283.5 256 L296.5 242.5" fill="none" stroke="#c0c0c0" stroke-width="2.6"/>
<text x="330" y="256.5" font-size="22" fill="#555" font-family="Liberation Serif" font-style="italic" stroke="#555" stroke-width="0.4" textLength="19" lengthAdjust="spacingAndGlyphs">fx</text>
<rect x="372.5" y="232.5" width="1540" height="34" fill="#ffffff" stroke="#c6c6c6" stroke-width="1"/>
<text x="390.2" y="257" font-size="19" fill="#333" textLength="156.3" lengthAdjust="spacingAndGlyphs">nama:Aki Anduat</text>
<path d="M1894 247.5 L1899.5 253 L1905 247.5" fill="none" stroke="#666" stroke-width="2.8"/>
<rect x="42" y="310" width="1847" height="643" fill="#ffffff"/>
<rect x="0" y="282" width="1889" height="28" fill="#e6e6e6"/>
<rect x="42" y="282" width="272" height="28" fill="#d2d2d2"/>
<rect x="0" y="310" width="42" height="643" fill="#e6e6e6"/>
<rect x="0" y="310" width="42" height="29" fill="#d2d2d2"/>
<line x1="314.5" y1="310" x2="314.5" y2="953" stroke="#d4d4d4" stroke-width="1"/>
<line x1="410.5" y1="310" x2="410.5" y2="610" stroke="#d4d4d4" stroke-width="1"/>
<line x1="410.5" y1="719" x2="410.5" y2="749" stroke="#d4d4d4" stroke-width="1"/>
<line x1="506.5" y1="310" x2="506.5" y2="953" stroke="#d4d4d4" stroke-width="1"/>
<line x1="602.5" y1="310" x2="602.5" y2="953" stroke="#d4d4d4" stroke-width="1"/>
<line x1="714.5" y1="310" x2="714.5" y2="953" stroke="#d4d4d4" stroke-width="1"/>
<line x1="829.5" y1="310" x2="829.5" y2="953" stroke="#d4d4d4" stroke-width="1"/>
<line x1="925.5" y1="310" x2="925.5" y2="953" stroke="#d4d4d4" stroke-width="1"/>
<line x1="1021.5" y1="310" x2="1021.5" y2="953" stroke="#d4d4d4" stroke-width="1"/>
<line x1="1117.5" y1="310" x2="1117.5" y2="953" stroke="#d4d4d4" stroke-width="1"/>
<line x1="1213.5" y1="310" x2="1213.5" y2="953" stroke="#d4d4d4" stroke-width="1"/>
<line x1="1309.5" y1="310" x2="1309.5" y2="953" stroke="#d4d4d4" stroke-width="1"/>
<line x1="1405.5" y1="310" x2="1405.5" y2="953" stroke="#d4d4d4" stroke-width="1"/>
<line x1="1501.5" y1="310" x2="1501.5" y2="953" stroke="#d4d4d4" stroke-width="1"/>
<line x1="1597.5" y1="310" x2="1597.5" y2="953" stroke="#d4d4d4" stroke-width="1"/>
<line x1="1693.5" y1="310" x2="1693.5" y2="953" stroke="#d4d4d4" stroke-width="1"/>
<line x1="1789.5" y1="310" x2="1789.5" y2="953" stroke="#d4d4d4" stroke-width="1"/>
<line x1="1885.5" y1="310" x2="1885.5" y2="953" stroke="#d4d4d4" stroke-width="1"/>
<line x1="42" y1="339.5" x2="1889" y2="339.5" stroke="#d4d4d4" stroke-width="1"/>
<line x1="42" y1="368.5" x2="1889" y2="368.5" stroke="#d4d4d4" stroke-width="1"/>
<line x1="42" y1="397.5" x2="1889" y2="397.5" stroke="#d4d4d4" stroke-width="1"/>
<line x1="42" y1="426.5" x2="1889" y2="426.5" stroke="#d4d4d4" stroke-width="1"/>
<line x1="42" y1="455.5" x2="1889" y2="455.5" stroke="#d4d4d4" stroke-width="1"/>
<line x1="42" y1="517.5" x2="1889" y2="517.5" stroke="#d4d4d4" stroke-width="1"/>
<line x1="42" y1="610.5" x2="1889" y2="610.5" stroke="#d4d4d4" stroke-width="1"/>
<line x1="42" y1="719.5" x2="1889" y2="719.5" stroke="#d4d4d4" stroke-width="1"/>
<line x1="42" y1="749.5" x2="1889" y2="749.5" stroke="#d4d4d4" stroke-width="1"/>
<line x1="42" y1="866.5" x2="1889" y2="866.5" stroke="#d4d4d4" stroke-width="1"/>
<line x1="314.5" y1="282" x2="314.5" y2="310" stroke="#bfbfbf" stroke-width="1"/>
<line x1="410.5" y1="282" x2="410.5" y2="310" stroke="#bfbfbf" stroke-width="1"/>
<line x1="506.5" y1="282" x2="506.5" y2="310" stroke="#bfbfbf" stroke-width="1"/>
<line x1="602.5" y1="282" x2="602.5" y2="310" stroke="#bfbfbf" stroke-width="1"/>
<line x1="714.5" y1="282" x2="714.5" y2="310" stroke="#bfbfbf" stroke-width="1"/>
<line x1="829.5" y1="282" x2="829.5" y2="310" stroke="#bfbfbf" stroke-width="1"/>
<line x1="925.5" y1="282" x2="925.5" y2="310" stroke="#bfbfbf" stroke-width="1"/>
<line x1="1021.5" y1="282" x2="1021.5" y2="310" stroke="#bfbfbf" stroke-width="1"/>
<line x1="1117.5" y1="282" x2="1117.5" y2="310" stroke="#bfbfbf" stroke-width="1"/>
<line x1="1213.5" y1="282" x2="1213.5" y2="310" stroke="#bfbfbf" stroke-width="1"/>
<line x1="1309.5" y1="282" x2="1309.5" y2="310" stroke="#bfbfbf" stroke-width="1"/>
<line x1="1405.5" y1="282" x2="1405.5" y2="310" stroke="#bfbfbf" stroke-width="1"/>
<line x1="1501.5" y1="282" x2="1501.5" y2="310" stroke="#bfbfbf" stroke-width="1"/>
<line x1="1597.5" y1="282" x2="1597.5" y2="310" stroke="#bfbfbf" stroke-width="1"/>
<line x1="1693.5" y1="282" x2="1693.5" y2="310" stroke="#bfbfbf" stroke-width="1"/>
<line x1="1789.5" y1="282" x2="1789.5" y2="310" stroke="#bfbfbf" stroke-width="1"/>
<line x1="1885.5" y1="282" x2="1885.5" y2="310" stroke="#bfbfbf" stroke-width="1"/>
<line x1="0" y1="339.5" x2="42" y2="339.5" stroke="#bfbfbf" stroke-width="1"/>
<line x1="0" y1="368.5" x2="42" y2="368.5" stroke="#bfbfbf" stroke-width="1"/>
<line x1="0" y1="397.5" x2="42" y2="397.5" stroke="#bfbfbf" stroke-width="1"/>
<line x1="0" y1="426.5" x2="42" y2="426.5" stroke="#bfbfbf" stroke-width="1"/>
<line x1="0" y1="455.5" x2="42" y2="455.5" stroke="#bfbfbf" stroke-width="1"/>
<line x1="0" y1="517.5" x2="42" y2="517.5" stroke="#bfbfbf" stroke-width="1"/>
<line x1="0" y1="610.5" x2="42" y2="610.5" stroke="#bfbfbf" stroke-width="1"/>
<line x1="0" y1="719.5" x2="42" y2="719.5" stroke="#bfbfbf" stroke-width="1"/>
<line x1="0" y1="749.5" x2="42" y2="749.5" stroke="#bfbfbf" stroke-width="1"/>
<line x1="0" y1="866.5" x2="42" y2="866.5" stroke="#bfbfbf" stroke-width="1"/>
<line x1="0" y1="310.5" x2="1889" y2="310.5" stroke="#ababab" stroke-width="1"/>
<line x1="41.5" y1="282" x2="41.5" y2="953" stroke="#ababab" stroke-width="1"/>
<line x1="1889.5" y1="310" x2="1889.5" y2="953" stroke="#ababab" stroke-width="1"/>
<path d="M19 306.5 L39.3 306.5 L39.3 286.5 Z" fill="#bdbdbd"/>
<text x="178.5" y="305" font-size="18.5" fill="#217346" text-anchor="middle">A</text>
<text x="362.5" y="305" font-size="18.5" fill="#222" text-anchor="middle">B</text>
<text x="458.5" y="305" font-size="18.5" fill="#222" text-anchor="middle">C</text>
<text x="554.5" y="305" font-size="18.5" fill="#222" text-anchor="middle">D</text>
<text x="658.5" y="305" font-size="18.5" fill="#222" text-anchor="middle">E</text>
<text x="772.0" y="305" font-size="18.5" fill="#222" text-anchor="middle">F</text>
<text x="877.5" y="305" font-size="18.5" fill="#222" text-anchor="middle">G</text>
<text x="973.5" y="305" font-size="18.5" fill="#222" text-anchor="middle">H</text>
<text x="1069.5" y="305" font-size="18.5" fill="#222" text-anchor="middle">I</text>
<text x="1165.5" y="305" font-size="18.5" fill="#222" text-anchor="middle">J</text>
<text x="1261.5" y="305" font-size="18.5" fill="#222" text-anchor="middle">K</text>
<text x="1357.5" y="305" font-size="18.5" fill="#222" text-anchor="middle">L</text>
<text x="1453.5" y="305" font-size="18.5" fill="#222" text-anchor="middle">M</text>
<text x="1549.5" y="305" font-size="18.5" fill="#222" text-anchor="middle">N</text>
<text x="1645.5" y="305" font-size="18.5" fill="#222" text-anchor="middle">O</text>
<text x="1741.5" y="305" font-size="18.5" fill="#222" text-anchor="middle">P</text>
<text x="1837.5" y="305" font-size="18.5" fill="#222" text-anchor="middle">Q</text>
<text x="21.5" y="333" font-size="19" fill="#217346" text-anchor="middle">1</text>
<text x="21.5" y="362" font-size="19" fill="#222" text-anchor="middle">2</text>
<text x="21.5" y="391" font-size="19" fill="#222" text-anchor="middle">3</text>
<text x="21.5" y="420" font-size="19" fill="#222" text-anchor="middle">4</text>
<text x="21.5" y="449" font-size="19" fill="#222" text-anchor="middle">5</text>
<text x="21.5" y="507" font-size="19" fill="#222" text-anchor="middle">6</text>
<text x="21.5" y="600" font-size="19" fill="#222" text-anchor="middle">7</text>
<text x="21.5" y="709" font-size="19" fill="#222" text-anchor="middle">8</text>
<text x="21.5" y="739" font-size="19" fill="#222" text-anchor="middle">9</text>
<text x="21.5" y="856" font-size="19" fill="#222" text-anchor="middle">10</text>
<text x="47" y="333" font-size="19" fill="#000" textLength="157" lengthAdjust="spacingAndGlyphs">nama:Aki Anduat</text>
<text x="47" y="362" font-size="19" fill="#000" textLength="126.5" lengthAdjust="spacingAndGlyphs">kelas:6 Kreatif</text>
<text x="47" y="391" font-size="19" fill="#000" textLength="206" lengthAdjust="spacingAndGlyphs">Sekolah:SK umas umas</text>
<rect x="314" y="426" width="804" height="30" fill="#4472c4"/>
<text x="716" y="449" font-size="19" fill="#000" text-anchor="middle" textLength="38" lengthAdjust="spacingAndGlyphs">Hari</text>
<clipPath id="gridclip"><rect x="42" y="310" width="1847" height="643"/></clipPath>
<g clip-path="url(#gridclip)">
<path d="M42 517 L103.5 455.5 L375.5 455.5 L314 517 Z" fill="#4472c4"/>
<path d="M42 610.5 L135.0 517.5 L407.0 517.5 L314 610.5 Z" fill="#ffcc99" stroke="#5a5a5a" stroke-width="1"/>
<path d="M42 719.5 L151.0 610.5 L423.0 610.5 L314 719.5 Z" fill="#ffcc99" stroke="#5a5a5a" stroke-width="1"/>
<rect x="42" y="719.5" width="272" height="30" fill="#ffcc99" stroke="#5a5a5a" stroke-width="1"/>
<path d="M42 866.5 L159.0 749.5 L431.0 749.5 L314 866.5 Z" fill="#ffcc99" stroke="#5a5a5a" stroke-width="1"/>
<path d="M42 1027.5 L203.0 866.5 L475.0 866.5 L314 1027.5 Z" fill="#ffcc99" stroke="#5a5a5a" stroke-width="1"/>
<text x="0" y="0" font-size="20.5" fill="#ffffff" textLength="50" lengthAdjust="spacingAndGlyphs" stroke="#ffffff" stroke-width="0.3" transform="translate(83,512.5) rotate(-45)">Masa</text>
<text x="0" y="0" font-size="20.5" fill="#3f3f76" textLength="94" lengthAdjust="spacingAndGlyphs" stroke="#3f3f76" stroke-width="0.3" transform="translate(83,605.5) rotate(-45)">6am-7 am</text>
<text x="0" y="0" font-size="20.5" fill="#3f3f76" textLength="115" lengthAdjust="spacingAndGlyphs" stroke="#3f3f76" stroke-width="0.3" transform="translate(83,714.5) rotate(-45)">8 pagi-9 pagi</text>
<text x="0" y="0" font-size="20.5" fill="#3f3f76" textLength="127" lengthAdjust="spacingAndGlyphs" stroke="#3f3f76" stroke-width="0.3" transform="translate(83,861.5) rotate(-45)">10pagi-11pagi</text>
<text x="0" y="0" font-size="20.5" fill="#3f3f76" textLength="186" lengthAdjust="spacingAndGlyphs" stroke="#3f3f76" stroke-width="0.3" transform="translate(82.5,1022.0) rotate(-45)">11pagi-12tengahhari</text>
</g>
<rect x="314" y="516" width="708" height="3" fill="#5b8bc9"/>
<rect x="314" y="609" width="708" height="3" fill="#5b8bc9"/>
<rect x="314" y="718" width="708" height="3" fill="#5b8bc9"/>
<rect x="314" y="748" width="708" height="3" fill="#5b8bc9"/>
<rect x="314" y="865" width="708" height="3" fill="#5b8bc9"/>
<line x1="314" y1="517.5" x2="407" y2="517.5" stroke="#5a5a5a" stroke-width="1.2" opacity="0.55"/>
<line x1="314" y1="610.5" x2="423" y2="610.5" stroke="#5a5a5a" stroke-width="1.2" opacity="0.55"/>
<line x1="314" y1="749.5" x2="431" y2="749.5" stroke="#5a5a5a" stroke-width="1.2" opacity="0.55"/>
<line x1="314" y1="866.5" x2="475.5" y2="866.5" stroke="#5a5a5a" stroke-width="1.2" opacity="0.55"/>
<text x="318.3" y="507.7" font-size="27" fill="#44546a" font-weight="bold" textLength="60.4" lengthAdjust="spacingAndGlyphs">Isnin</text>
<text x="414.3" y="507.7" font-size="27" fill="#44546a" font-weight="bold" textLength="78.9" lengthAdjust="spacingAndGlyphs">Selasa</text>
<text x="510.8" y="507.7" font-size="27" fill="#44546a" font-weight="bold" textLength="64.9" lengthAdjust="spacingAndGlyphs">Rabu</text>
<text x="606.8" y="507.7" font-size="27" fill="#44546a" font-weight="bold" textLength="91.4" lengthAdjust="spacingAndGlyphs">Khamis</text>
<text x="716.8" y="507.7" font-size="27" fill="#44546a" font-weight="bold" textLength="93.9" lengthAdjust="spacingAndGlyphs">Jumaat</text>
<text x="832.8" y="507.7" font-size="27" fill="#44546a" font-weight="bold" textLength="72.9" lengthAdjust="spacingAndGlyphs">Sabtu</text>
<text x="928.8" y="507.7" font-size="27" fill="#44546a" font-weight="bold" textLength="66.9" lengthAdjust="spacingAndGlyphs">Ahad</text>
<text x="318.8" y="600.7" font-size="27" fill="#44546a" font-weight="bold" textLength="43.4" lengthAdjust="spacingAndGlyphs">BM</text>
<text x="414.3" y="600.7" font-size="27" fill="#44546a" font-weight="bold" textLength="42.4" lengthAdjust="spacingAndGlyphs">MT</text>
<text x="509.8" y="600.7" font-size="27" fill="#44546a" font-weight="bold" textLength="40.9" lengthAdjust="spacingAndGlyphs">SEJ</text>
<text x="606.3" y="600.7" font-size="27" fill="#44546a" font-weight="bold" textLength="42.9" lengthAdjust="spacingAndGlyphs">PAI</text>
<text x="718.3" y="600.7" font-size="27" fill="#44546a" font-weight="bold" textLength="42.4" lengthAdjust="spacingAndGlyphs">PM</text>
<text x="833.3" y="600.7" font-size="27" fill="#44546a" font-weight="bold" textLength="26.9" lengthAdjust="spacingAndGlyphs">PJ</text>
<text x="928.8" y="600.7" font-size="27" fill="#44546a" font-weight="bold" textLength="25.9" lengthAdjust="spacingAndGlyphs">BI</text>
<text x="318.8" y="709.7" font-size="27" fill="#44546a" font-weight="bold" textLength="42.4" lengthAdjust="spacingAndGlyphs">MT</text>
<text x="414.3" y="709.7" font-size="27" fill="#44546a" font-weight="bold" textLength="77.4" lengthAdjust="spacingAndGlyphs">SAINS</text>
<text x="509.8" y="709.7" font-size="27" fill="#44546a" font-weight="bold" textLength="43.4" lengthAdjust="spacingAndGlyphs">BM</text>
<text x="606.3" y="709.7" font-size="27" fill="#44546a" font-weight="bold" textLength="42.9" lengthAdjust="spacingAndGlyphs">PAI</text>
<text x="718.3" y="709.7" font-size="27" fill="#44546a" font-weight="bold" textLength="43.4" lengthAdjust="spacingAndGlyphs">BM</text>
<text x="833.3" y="709.7" font-size="27" fill="#44546a" font-weight="bold" textLength="40.9" lengthAdjust="spacingAndGlyphs">SEJ</text>
<text x="928.8" y="709.7" font-size="27" fill="#44546a" font-weight="bold" textLength="25.9" lengthAdjust="spacingAndGlyphs">BI</text>
<text x="318.8" y="856.7" font-size="27" fill="#44546a" font-weight="bold" textLength="25.9" lengthAdjust="spacingAndGlyphs">BI</text>
<text x="414.3" y="856.7" font-size="27" fill="#44546a" font-weight="bold" textLength="40.9" lengthAdjust="spacingAndGlyphs">SEJ</text>
<text x="509.8" y="856.7" font-size="27" fill="#44546a" font-weight="bold" textLength="77.4" lengthAdjust="spacingAndGlyphs">SAINS</text>
<text x="606.3" y="856.7" font-size="27" fill="#44546a" font-weight="bold" textLength="42.9" lengthAdjust="spacingAndGlyphs">PAI</text>
<text x="718.3" y="856.7" font-size="27" fill="#44546a" font-weight="bold" textLength="42.4" lengthAdjust="spacingAndGlyphs">MT</text>
<text x="833.3" y="856.7" font-size="27" fill="#44546a" font-weight="bold" textLength="43.4" lengthAdjust="spacingAndGlyphs">BM</text>
<text x="928.8" y="856.7" font-size="27" fill="#44546a" font-weight="bold" textLength="26.9" lengthAdjust="spacingAndGlyphs">PJ</text>
<rect x="42" y="310" width="273" height="30" fill="none" stroke="#1e6b40" stroke-width="2"/>
<rect x="309.5" y="334.5" width="9" height="9" fill="#ffffff"/>
<rect x="311" y="336" width="6" height="6" fill="#217346"/>
<rect x="1889" y="282" width="31" height="671" fill="#e6e6e6"/>
<rect x="1892.5" y="282.5" width="23.5" height="23.5" fill="#ffffff" stroke="#c6c6c6" stroke-width="1"/>
<path d="M1898.5 298 L1904.2 292 L1910 298 Z" fill="#777"/>
<rect x="1892.5" y="308.5" width="23.5" height="376.5" fill="#ffffff" stroke="#ababab" stroke-width="1"/>
<rect x="1893" y="685.5" width="23" height="245" fill="#dadada"/>
<rect x="1892.5" y="930.5" width="23.5" height="22.5" fill="#ffffff" stroke="#c6c6c6" stroke-width="1"/>
<path d="M1898.5 938 L1904.2 944 L1910 938 Z" fill="#777"/>
<rect x="0" y="953" width="1920" height="35" fill="#e6e6e6"/>
<line x1="0" y1="953.5" x2="1889" y2="953.5" stroke="#ababab" stroke-width="1"/>
<path d="M35 965 L30.5 970.5 L35 976 Z" fill="#c0c0c0"/>
<path d="M64.5 965 L69 970.5 L64.5 976 Z" fill="#c0c0c0"/>
<rect x="118.5" y="953" width="88" height="31" fill="#ffffff" stroke="#c6c6c6" stroke-width="1"/>
<rect x="118" y="981" width="89" height="3" fill="#217346"/>
<text x="131" y="975" font-size="18" fill="#217346" font-weight="bold" textLength="62" lengthAdjust="spacingAndGlyphs">Sheet1</text>
<circle cx="258" cy="970.8" r="9.8" fill="none" stroke="#777" stroke-width="1.3"/>
<line x1="252.5" y1="970.8" x2="263.5" y2="970.8" stroke="#666" stroke-width="1.6"/>
<line x1="258" y1="965.3" x2="258" y2="976.3" stroke="#666" stroke-width="1.6"/>
<rect x="1148" y="962.5" width="2.6" height="2.6" fill="#9a9a9a"/>
<rect x="1148" y="969" width="2.6" height="2.6" fill="#9a9a9a"/>
<rect x="1148" y="975.5" width="2.6" height="2.6" fill="#9a9a9a"/>
<rect x="1169.5" y="957.5" width="23.5" height="23.5" fill="#ffffff" stroke="#c6c6c6" stroke-width="1"/>
<path d="M1184 964 L1178 969.2 L1184 974.5 Z" fill="#777"/>
<rect x="1193.5" y="957.5" width="632" height="23.5" fill="#ffffff" stroke="#ababab" stroke-width="1"/>
<rect x="1826" y="958" width="41" height="23" fill="#dadada"/>
<rect x="1867.5" y="957.5" width="23.5" height="23.5" fill="#ffffff" stroke="#c6c6c6" stroke-width="1"/>
<path d="M1876 964 L1882 969.2 L1876 974.5 Z" fill="#777"/>
<rect x="0" y="988" width="1920" height="9" fill="#f1f1f1"/>
<line x1="0" y1="987.5" x2="1920" y2="987.5" stroke="#c6c6c6" stroke-width="1"/>
<rect x="1529" y="988" width="45" height="9" fill="#c8c8c8"/>
<rect x="1542.5" y="994.5" width="19" height="6" fill="none" stroke="#777" stroke-width="1"/>
<line x1="1548.5" y1="994.5" x2="1548.5" y2="997" stroke="#777" stroke-width="1"/>
<line x1="1555" y1="994.5" x2="1555" y2="997" stroke="#777" stroke-width="1"/>
<rect x="1632.5" y="994.5" width="19" height="6" fill="none" stroke="#777" stroke-width="1"/>
<line x1="1638.5" y1="994.5" x2="1638.5" y2="997" stroke="#777" stroke-width="1"/>
<line x1="1645" y1="994.5" x2="1645" y2="997" stroke="#777" stroke-width="1"/>
<rect x="1587.5" y="994.5" width="19" height="6" fill="none" stroke="#777" stroke-width="1"/>
<rect x="1758" y="995" width="6" height="2" fill="#555"/>
<rect x="1846.5" y="995.5" width="3" height="1.5" fill="#888"/>
</svg></body></html>
